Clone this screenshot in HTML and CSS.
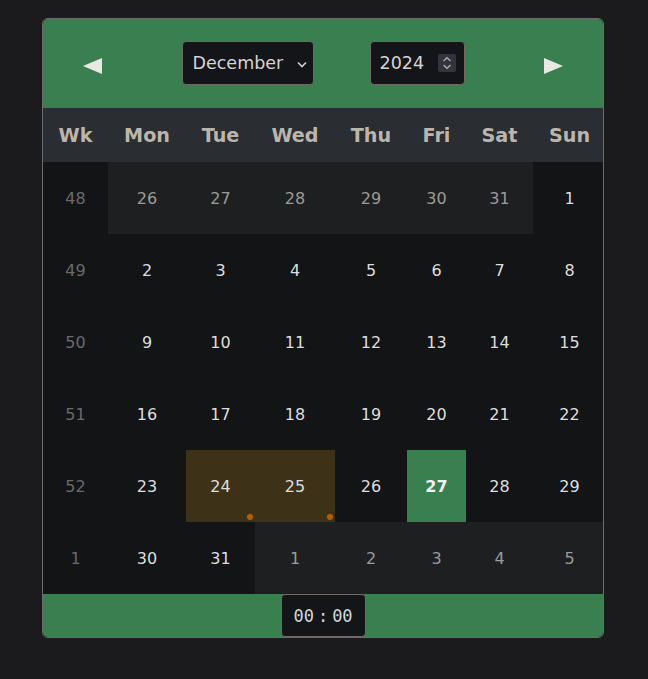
FILE: index.html
```html
<!DOCTYPE html>
<html lang="en">
<head>
<meta charset="utf-8">
<title>Calendar</title>
<link rel="stylesheet" href="styles.css">
</head>
<body>
<div class="cal">
  <div class="cal-head">
    <button class="nav" aria-label="Previous month">
      <svg width="19" height="16" viewBox="0 0 19 16"><polygon points="0,8 19,0 19,16" fill="#e9e9e4"/></svg>
    </button>
    <div class="pickers">
      <div class="select">
        <span>December</span>
        <svg class="chev" width="10" height="7" viewBox="0 0 10 7"><polyline points="1,1.5 5,5.5 9,1.5" fill="none" stroke="#d0d0d0" stroke-width="1.6"/></svg>
      </div>
      <div class="year">
        <span>2024</span>
        <span class="spin">
          <svg width="18" height="18" viewBox="0 0 18 18"><polyline points="5.5,7 9,3.8 12.5,7" fill="none" stroke="#a9a9b0" stroke-width="1.4"/><polyline points="5.5,11 9,14.2 12.5,11" fill="none" stroke="#a9a9b0" stroke-width="1.4"/></svg>
        </span>
      </div>
    </div>
    <button class="nav" aria-label="Next month">
      <svg width="19" height="16" viewBox="0 0 19 16"><polygon points="19,8 0,0 0,16" fill="#e9e9e4"/></svg>
    </button>
  </div>
  <div class="grid">
    <div class="th">Wk</div><div class="th">Mon</div><div class="th">Tue</div><div class="th">Wed</div><div class="th">Thu</div><div class="th">Fri</div><div class="th">Sat</div><div class="th sun">Sun</div>

    <div class="wk">48</div><div class="d other">26</div><div class="d other">27</div><div class="d other">28</div><div class="d other">29</div><div class="d other">30</div><div class="d other">31</div><div class="d sun">1</div>
    <div class="wk">49</div><div class="d">2</div><div class="d">3</div><div class="d">4</div><div class="d">5</div><div class="d">6</div><div class="d">7</div><div class="d sun">8</div>
    <div class="wk">50</div><div class="d">9</div><div class="d">10</div><div class="d">11</div><div class="d">12</div><div class="d">13</div><div class="d">14</div><div class="d sun">15</div>
    <div class="wk">51</div><div class="d">16</div><div class="d">17</div><div class="d">18</div><div class="d">19</div><div class="d">20</div><div class="d">21</div><div class="d sun">22</div>
    <div class="wk">52</div><div class="d">23</div><div class="d hl">24<span class="dot"></span></div><div class="d hl">25<span class="dot"></span></div><div class="d">26</div><div class="d today">27</div><div class="d">28</div><div class="d sun">29</div>
    <div class="wk">1</div><div class="d">30</div><div class="d">31</div><div class="d other">1</div><div class="d other">2</div><div class="d other">3</div><div class="d other">4</div><div class="d other sun">5</div>
  </div>
  <div class="cal-foot">
    <div class="time"><span>00</span><span class="colon">:</span><span>00</span></div>
  </div>
</div>
</body>
</html>
```
FILE: styles.css
```css
html, body {
  margin: 0;
  background: #1b1b1d;
}
body {
  padding: 18px 0 0 42px;
  font-family: "DejaVu Sans", sans-serif;
}
.cal {
  width: 560px;
  border: 1px solid #6c6c6c;
  border-radius: 6px;
  overflow: hidden;
  background: #131416;
}
.cal-head {
  height: 89px;
  background: #3a7f50;
  display: grid;
  grid-template-columns: auto 1fr auto;
  align-items: center;
  padding: 0 40px;
}
.nav {
  background: none;
  border: 0;
  padding: 0;
  margin: 0;
  width: 19px;
  height: 16px;
  display: flex;
  margin-top: 4px;
}
.pickers {
  display: flex;
  justify-content: center;
  gap: 56px;
  padding-bottom: 1px;
}
.select, .year {
  box-sizing: border-box;
  height: 44px;
  background: #141519;
  border: 1px solid #6e6a63;
  border-radius: 4px;
  color: #d4d4d4;
  font-size: 17.5px;
  display: flex;
  align-items: center;
}
.select {
  width: 132px;
  padding: 0 6px 0 10px;
  justify-content: space-between;
}
.chev { margin-top: 2px; }
.year {
  width: 95px;
  padding: 0 8px 0 9px;
  justify-content: space-between;
}
.spin {
  width: 18px;
  height: 18px;
  background: #34343d;
  border-radius: 2px;
  display: flex;
}
.grid {
  display: grid;
  grid-template-columns: 65px 78px 69px 80px 72px 59px 67px 70px;
}
.th {
  height: 54px;
  background: #2a2d31;
  color: #bbb6ad;
  font-weight: bold;
  font-size: 19.2px;
  display: flex;
  align-items: center;
  justify-content: center;
}
.wk, .d {
  height: 72px;
  display: flex;
  align-items: center;
  justify-content: center;
  font-size: 16px;
  position: relative;
}
.sun {
  padding-left: 3px;
}
.wk {
  color: #6a6a6a;
  background: #131416;
}
.d {
  color: #dedede;
  background: #131416;
}
.d.other {
  color: #9d9b97;
  background: #1e1f21;
}
.d.hl {
  background: #3d3118;
}
.d.today {
  background: #3a7f50;
  color: #f2f2f2;
  font-weight: bold;
}
.dot {
  position: absolute;
  right: 2px;
  bottom: 2px;
  width: 6px;
  height: 6px;
  border-radius: 50%;
  background: #b05f05;
}
.cal-foot {
  height: 43px;
  background: #3a7f50;
  display: flex;
  justify-content: center;
}
.time {
  box-sizing: border-box;
  width: 85px;
  height: 43px;
  background: #141519;
  border: 1px solid #6e6a63;
  border-radius: 4px;
  color: #d2d6da;
  font-family: "DejaVu Sans Mono", monospace;
  font-size: 17px;
  display: flex;
  align-items: center;
  justify-content: center;
}
.colon {
  margin: 0 4px;
}
```
